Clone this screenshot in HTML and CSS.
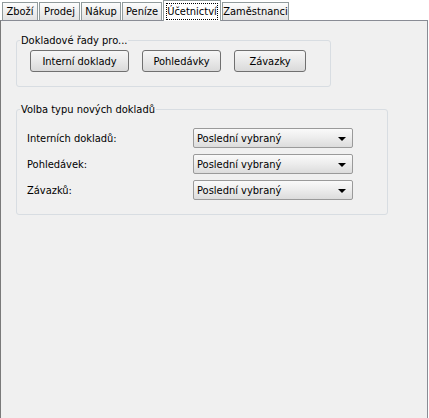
FILE: index.html
```html
<!DOCTYPE html>
<html>
<head>
<meta charset="utf-8">
<link rel="stylesheet" href="styles.css">
</head>
<body>
<div class="window">
  <div class="tabs">
    <div class="tab t1">Zboží</div>
    <div class="tab t2">Prodej</div>
    <div class="tab t3">Nákup</div>
    <div class="tab t4">Peníze</div>
    <div class="tab t5 active"><span class="focus">Účetnictví</span></div>
    <div class="tab t6">Zaměstnanci</div>
  </div>
  <div class="panel">
    <fieldset class="group group1">
      <legend>Dokladové řady pro...</legend>
      <div class="buttons">
        <button class="btn b1">Interní doklady</button>
        <button class="btn b2">Pohledávky</button>
        <button class="btn b3">Závazky</button>
      </div>
    </fieldset>
    <fieldset class="group group2">
      <legend>Volba typu nových dokladů</legend>
      <div class="rows">
        <div class="row"><span class="label">Interních dokladů:</span><div class="combo"><span>Poslední vybraný</span><i class="arrow"></i></div></div>
        <div class="row"><span class="label">Pohledávek:</span><div class="combo"><span>Poslední vybraný</span><i class="arrow"></i></div></div>
        <div class="row"><span class="label">Závazků:</span><div class="combo"><span>Poslední vybraný</span><i class="arrow"></i></div></div>
      </div>
    </fieldset>
  </div>
</div>
</body>
</html>
```
FILE: styles.css
```css
html, body {
  margin: 0;
  padding: 0;
  background: #ffffff;
  font-family: Tahoma, "DejaVu Sans Condensed", "DejaVu Sans", sans-serif;
  font-size: 11px;
  color: #000;
}
.window {
  width: 428px;
  height: 418px;
  display: flex;
  flex-direction: column;
}
.tabs {
  display: flex;
  align-items: flex-end;
  height: 20px;
  padding-left: 2px;
  position: relative;
  z-index: 2;
}
.tab {
  height: 18px;
  box-sizing: border-box;
  border: 1px solid #919b9c;
  border-bottom: none;
  background: linear-gradient(#fdfdfd, #ececec 60%, #e2e2e2);
  padding: 0;
  text-align: center;
  line-height: 17px;
  margin-right: 1px;
  white-space: nowrap;
}
.t1 { width: 36px; }
.t2 { width: 41px; }
.t3 { width: 40px; }
.t4 { width: 40px; }
.t5 { width: 58px; }
.t6 { width: 67px; }
.tab.active {
  height: 21px;
  background: #ffffff;
  margin-bottom: -1px;
  padding: 2px 2px 0 2px;
  line-height: 15px;
}
.tab.active .focus {
  display: block;
  border: 1px dotted #000;
  height: 15px;
}
.panel {
  flex: 1;
  background: #f0f0f0;
  border: 1px solid #898c95;
  border-bottom: none;
  border-left-color: #7a7a7a;
  box-sizing: border-box;
  width: 428px;
  padding: 13px 0 0 15px;
}
.group {
  border: 1px solid #d8dde2;
  border-radius: 3px;
  margin: 0;
  box-sizing: border-box;
}
.group legend {
  padding: 0 1px;
  margin-left: 3px;
  line-height: 13px;
}
.group1 {
  width: 315px;
  padding: 3px 0 14px 0;
}
.buttons {
  display: flex;
  gap: 13px;
  padding-left: 13px;
}
.btn {
  font: inherit;
  height: 22px;
  box-sizing: border-box;
  border: 1px solid #707070;
  border-radius: 3px;
  background: linear-gradient(#f6f6f6, #e9e9e9 50%, #dadada);
  padding: 0;
  color: #000;
}
.b1 { width: 99px; }
.b2 { width: 79px; }
.b3 { width: 72px; }
.group2 {
  margin-top: 16px;
  width: 372px;
  padding: 12px 0 14px 0;
}
.rows {
  display: flex;
  flex-direction: column;
  gap: 6px;
  padding-left: 10px;
}
.row {
  display: flex;
  align-items: center;
  height: 20px;
}
.label {
  width: 166px;
}
.combo {
  width: 160px;
  height: 20px;
  box-sizing: border-box;
  border: 1px solid #9a9a9a;
  border-radius: 2px;
  background: linear-gradient(#fafafa, #ececec 50%, #dcdcdc);
  display: flex;
  align-items: center;
  padding: 0 6px 0 3px;
  justify-content: space-between;
}
.arrow {
  width: 0;
  height: 0;
  border-left: 4px solid transparent;
  border-right: 4px solid transparent;
  border-top: 4px solid #000;
  margin-top: 2px;
}
```
